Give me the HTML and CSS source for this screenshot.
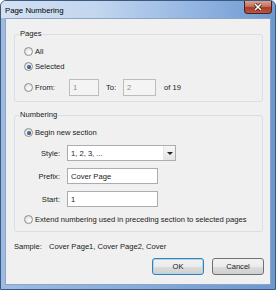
FILE: index.html
```html
<!DOCTYPE html>
<html lang="en">
<head>
    <meta charset="UTF-8">
    <title>Page Numbering</title>
    <link rel="stylesheet" href="styles.css">
</head>
<body>

    <div class="window">
        <!-- Title bar -->
        <div class="titlebar">
            <span class="title">Page Numbering</span>
            <div class="close">
                <svg width="12" height="8" viewBox="0 0 12 8">
                    <path d="M3 1 L9 7 M9 1 L3 7" stroke="#3a1a14" stroke-width="3" fill="none"/>
                    <path d="M3 1 L9 7 M9 1 L3 7" stroke="#ffffff" stroke-width="1.6" fill="none"/>
                </svg>
            </div>
        </div>

        <div class="content">
            <!-- Pages -->
            <fieldset class="group pages">
                <legend>Pages</legend>
                <div class="radio-row"><span class="radio"></span>All</div>
                <div class="radio-row"><span class="radio checked"></span>Selected</div>
                <div class="from-row">
                    <span class="radio"></span>
                    <span class="from-label">From:</span>
                    <span class="textbox disabled from-box">1</span>
                    <span class="to-label">To:</span>
                    <span class="textbox disabled to-box">2</span>
                    <span class="of-label">of 19</span>
                </div>
            </fieldset>

            <!-- Numbering -->
            <fieldset class="group numbering">
                <legend>Numbering</legend>
                <div class="radio-row"><span class="radio checked"></span>Begin new section</div>
                <div class="field-row style-row">
                    <span class="field-label">Style:</span>
                    <div class="dropdown">
                        <span class="dropdown-value">1, 2, 3, ...</span>
                        <span class="dropdown-arrow"></span>
                    </div>
                </div>
                <div class="field-row">
                    <span class="field-label">Prefix:</span>
                    <span class="textbox field-box">Cover Page</span>
                </div>
                <div class="field-row">
                    <span class="field-label">Start:</span>
                    <span class="textbox field-box">1</span>
                </div>
                <div class="radio-row extend-row"><span class="radio"></span>Extend numbering used in preceding section to selected pages</div>
            </fieldset>

            <div class="sample">
                <span class="sample-label">Sample:</span>
                <span>Cover Page1, Cover Page2, Cover</span>
            </div>

            <div class="buttons">
                <div class="btn default">OK</div>
                <div class="btn">Cancel</div>
            </div>
        </div>
    </div>

</body>
</html>
```

FILE: styles.css
```css
/* Base */
* {
    box-sizing: border-box;
}

html, body {
    margin: 0;
    padding: 0;
    background: #ffffff;
}

body {
    width: 276px;
    height: 290px;
    overflow: hidden;
    font-family: "Liberation Sans", Arial, sans-serif;
    font-size: 7.6px;
    color: #1a1a1a;
}

/* Window frame */
.window {
    width: 276px;
    height: 290px;
    display: flex;
    flex-direction: column;
    padding: 0 4px 4px;
    border: 1px solid #3c5a80;
    border-radius: 6px 6px 0 0;
    background: linear-gradient(to right, #9dbbe2 0%, #88abdb 50%, #6c97d0 100%);
}

.titlebar {
    height: 17px;
    display: flex;
    align-items: center;
    justify-content: space-between;
    margin: 0 -4px;
    padding: 0 3px 0 4px;
    border-radius: 5px 5px 0 0;
    background: linear-gradient(to right, #d3e1f2 0%, #c2d6ef 35%, #93b5e2 70%, #6e99d2 100%);
}

.title {
    font-size: 7.8px;
    padding-top: 1px;
    color: #000000;
}

.close {
    width: 28px;
    height: 13px;
    align-self: flex-start;
    display: flex;
    align-items: center;
    justify-content: center;
    border: 1px solid #4b1f18;
    border-top: none;
    border-radius: 0 0 4px 4px;
    background: linear-gradient(to bottom, #d9a195 0%, #c4715f 45%, #a93b26 55%, #b65a45 100%);
}

/* Client area */
.content {
    flex: 1;
    display: flex;
    flex-direction: column;
    padding: 9px 7px 0 8px;
    background: #f0f0f0;
    border: 1px solid #8ca5c5;
}

/* Group boxes */
.group {
    margin: 0;
    padding: 4px 0 5px 9px;
    border: 1px solid #d5dfe5;
    border-radius: 3px;
}

.group legend {
    margin-left: -5px;
    padding: 0 1px;
    line-height: 12px;
}

.numbering {
    margin-top: 7px;
    padding-bottom: 4px;
}

/* Radio buttons */
.radio-row {
    display: flex;
    align-items: center;
    gap: 2px;
    height: 15px;
}

.radio {
    width: 9px;
    height: 9px;
    flex: none;
    border-radius: 50%;
    border: 1px solid #8e8f8f;
    background: radial-gradient(circle at 60% 65%, #ffffff 0%, #e6e6e6 60%, #cfcfcf 100%);
    position: relative;
}

.radio.checked::after {
    content: "";
    position: absolute;
    left: 1.5px;
    top: 1.5px;
    width: 4px;
    height: 4px;
    border-radius: 50%;
    background: radial-gradient(circle at 40% 40%, #5b86b8 0%, #1b3f6e 70%);
}

/* From / To row */
.from-row {
    display: flex;
    align-items: center;
    height: 17px;
    margin-top: 5px;
}

.from-label {
    width: 36px;
    padding-left: 2px;
}

.textbox {
    height: 17px;
    display: flex;
    align-items: center;
    padding-left: 3px;
    background: #ffffff;
    border: 1px solid #abadb3;
}

.textbox.disabled {
    background: #f4f4f4;
    border-color: #bdbdbd;
    color: #8d8d8d;
}

.from-box {
    width: 30px;
}

.to-label {
    margin-left: 7px;
    width: 17px;
}

.to-box {
    width: 33px;
}

.of-label {
    margin-left: 8px;
}

/* Labeled fields */
.field-row {
    display: flex;
    align-items: center;
    gap: 7px;
    margin-top: 7px;
}

.style-row {
    margin-top: 5px;
}

.field-label {
    width: 36px;
    text-align: right;
}

.field-box {
    width: 91px;
    height: 16px;
}

.dropdown {
    width: 109px;
    height: 16px;
    display: flex;
    align-items: center;
    justify-content: space-between;
    background: #ffffff;
    border: 1px solid #abadb3;
}

.dropdown-value {
    padding-left: 3px;
}

.dropdown-arrow {
    width: 12px;
    height: 14px;
    border-left: 1px solid #e6e6e6;
    background: linear-gradient(to bottom, #f7f7f7, #e4e4e4);
    position: relative;
}

.dropdown-arrow::after {
    content: "";
    position: absolute;
    left: 3px;
    top: 6px;
    border-left: 3px solid transparent;
    border-right: 3px solid transparent;
    border-top: 3px solid #222222;
}

.extend-row {
    margin-top: 5px;
}

/* Sample line */
.sample {
    display: flex;
    line-height: 12px;
    margin-top: 9px;
}

.sample-label {
    width: 35px;
}

/* Buttons */
.buttons {
    display: flex;
    justify-content: flex-end;
    gap: 8px;
    margin-top: 5px;
    margin-right: -1px;
}

.btn {
    width: 52px;
    height: 17px;
    display: flex;
    align-items: center;
    justify-content: center;
    border: 1px solid #707070;
    border-radius: 3px;
    background: linear-gradient(to bottom, #f2f2f2 0%, #ebebeb 50%, #dddddd 51%, #cfcfcf 100%);
}

.btn.default {
    border-color: #3c7fb1;
    box-shadow: inset 0 0 0 1px #a8d8f0;
}
```
